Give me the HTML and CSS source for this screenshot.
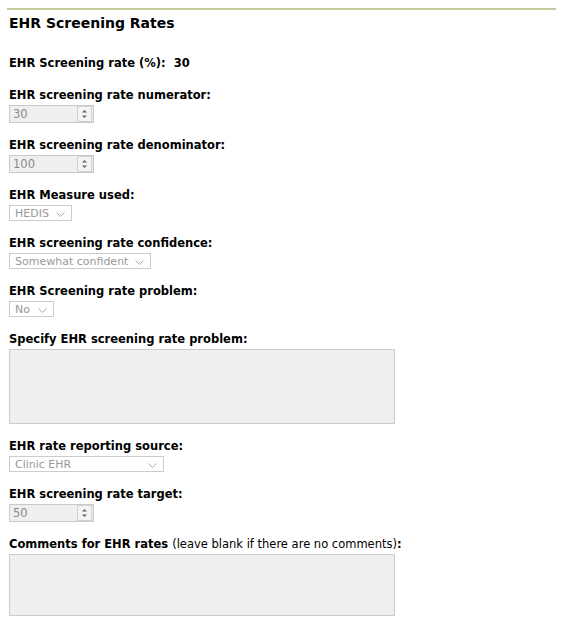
FILE: index.html
```html
<!DOCTYPE html>
<html lang="en">
<head>
  <meta charset="UTF-8">
  <title>EHR Screening Rates</title>
  <link rel="stylesheet" href="styles.css">
</head>
<body>
  <div class="panel">
    <h2 class="panel-title">EHR Screening Rates</h2>

    <div class="rate-line">EHR Screening rate (%):&nbsp; 30</div>

    <div class="field">
      <label>EHR screening rate numerator:</label>
      <div class="num-box">
        <span class="num-value">30</span>
        <svg class="spinner" width="15" height="16" viewBox="0 0 15 16">
          <rect x="0.5" y="0.5" width="14" height="15" fill="#f4f4f4" stroke="#d2d2d2"/>
          <path d="M5 6.5 L7.5 4 L10 6.5 Z" fill="#666"/>
          <path d="M5 9.5 L7.5 12 L10 9.5 Z" fill="#666"/>
        </svg>
      </div>
    </div>

    <div class="field">
      <label>EHR screening rate denominator:</label>
      <div class="num-box">
        <span class="num-value">100</span>
        <svg class="spinner" width="15" height="16" viewBox="0 0 15 16">
          <rect x="0.5" y="0.5" width="14" height="15" fill="#f4f4f4" stroke="#d2d2d2"/>
          <path d="M5 6.5 L7.5 4 L10 6.5 Z" fill="#666"/>
          <path d="M5 9.5 L7.5 12 L10 9.5 Z" fill="#666"/>
        </svg>
      </div>
    </div>

    <div class="field">
      <label>EHR Measure used:</label>
      <div class="select-box w-measure">
        <span>HEDIS</span>
        <svg class="chevron" width="9" height="5" viewBox="0 0 9 5"><path d="M0.5 0.5 L4.5 4.5 L8.5 0.5" fill="none" stroke="#aaa"/></svg>
      </div>
    </div>

    <div class="field">
      <label>EHR screening rate confidence:</label>
      <div class="select-box w-confidence">
        <span>Somewhat confident</span>
        <svg class="chevron" width="9" height="5" viewBox="0 0 9 5"><path d="M0.5 0.5 L4.5 4.5 L8.5 0.5" fill="none" stroke="#aaa"/></svg>
      </div>
    </div>

    <div class="field">
      <label>EHR Screening rate problem:</label>
      <div class="select-box w-problem">
        <span>No</span>
        <svg class="chevron" width="9" height="5" viewBox="0 0 9 5"><path d="M0.5 0.5 L4.5 4.5 L8.5 0.5" fill="none" stroke="#aaa"/></svg>
      </div>
    </div>

    <div class="field">
      <label>Specify EHR screening rate problem:</label>
      <textarea class="text-area tall" disabled></textarea>
    </div>

    <div class="field">
      <label>EHR rate reporting source:</label>
      <div class="select-box w-source">
        <span>Clinic EHR</span>
        <svg class="chevron" width="9" height="5" viewBox="0 0 9 5"><path d="M0.5 0.5 L4.5 4.5 L8.5 0.5" fill="none" stroke="#aaa"/></svg>
      </div>
    </div>

    <div class="field">
      <label>EHR screening rate target:</label>
      <div class="num-box">
        <span class="num-value">50</span>
        <svg class="spinner" width="15" height="16" viewBox="0 0 15 16">
          <rect x="0.5" y="0.5" width="14" height="15" fill="#f4f4f4" stroke="#d2d2d2"/>
          <path d="M5 6.5 L7.5 4 L10 6.5 Z" fill="#666"/>
          <path d="M5 9.5 L7.5 12 L10 9.5 Z" fill="#666"/>
        </svg>
      </div>
    </div>

    <div class="field">
      <label>Comments for EHR rates <span class="hint">(leave blank if there are no comments)</span>:</label>
      <textarea class="text-area short" disabled></textarea>
    </div>
  </div>
</body>
</html>
```

FILE: styles.css
```css
body {
  margin: 0;
  background-color: #ffffff;
  color: #000000;
  font-family: 'DejaVu Sans', Verdana, sans-serif;
  font-size: 11px;
}

.panel {
  margin: 8px 5px 0 7px;
  border-top: 2px solid #c8c99b;
  padding-left: 2px;
}

.panel-title {
  margin: 4px 0 0 0;
  font-size: 14px;
  line-height: 18px;
  font-weight: bold;
}

.rate-line {
  margin-top: 24px;
  font-size: 11.5px;
  font-weight: bold;
  line-height: 14px;
}

.field {
  margin-top: 18px;
}

.field + .field {
  margin-top: 15px;
}

.field label {
  display: block;
  font-size: 11.5px;
  font-weight: bold;
  line-height: 14px;
  margin-bottom: 3px;
}

.field label .hint {
  font-weight: normal;
}

.num-box {
  display: flex;
  align-items: center;
  justify-content: space-between;
  box-sizing: border-box;
  width: 85px;
  height: 18px;
  padding: 0 1px 0 3px;
  border: 1px solid #c9c9c9;
  background-color: #efefef;
  color: #8a8a8a;
  font-size: 11.5px;
}

.spinner {
  display: block;
}

.select-box {
  display: flex;
  align-items: center;
  justify-content: space-between;
  box-sizing: border-box;
  height: 16px;
  padding: 0 6px 0 5px;
  border: 1px solid #cccccc;
  background-color: #ffffff;
  color: #9a9a9a;
}

.chevron {
  display: block;
  margin-top: 2px;
}

.w-measure { width: 63px; }
.w-confidence { width: 142px; }
.w-problem { width: 45px; }
.w-source { width: 155px; }

.text-area {
  display: block;
  box-sizing: border-box;
  width: 386px;
  margin: 0 0 2px 0;
  border: 1px solid #cccccc;
  background-color: #efefef;
  resize: none;
}

.tall { height: 75px; }
.short { height: 62px; }
```
